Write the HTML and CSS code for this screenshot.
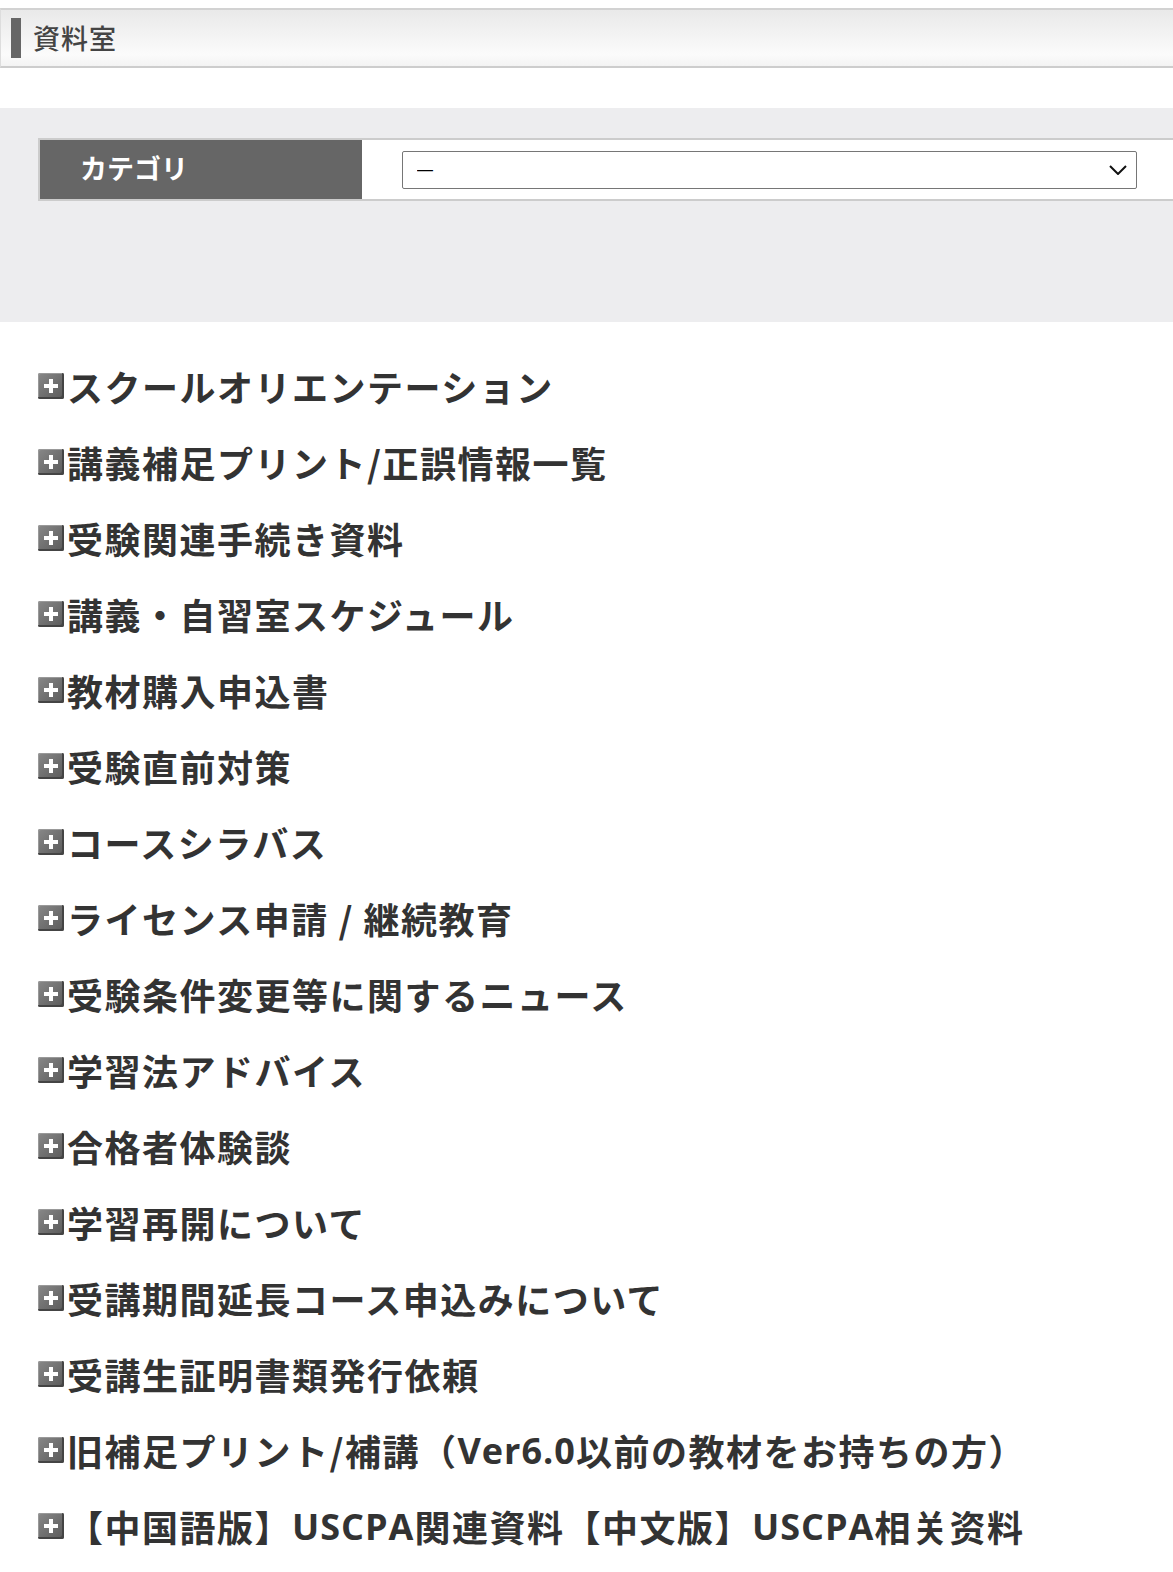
FILE: index.html
```html
<!DOCTYPE html>
<html lang="ja">
<head>
  <meta charset="UTF-8" />
  <meta name="viewport" content="width=device-width, initial-scale=1.0"/>
  <title>資料室</title>
  <link rel="stylesheet" href="styles.css">
</head>
<body>
  <div class="page-title"><h1>資料室</h1></div>

  <div class="search-box">
    <table class="search-table">
      <tr>
        <th>カテゴリ</th>
        <td>
          <div class="select-wrap">
            <select id="category">
              <option>—</option>
            </select>
            <svg class="select-arrow" width="18" height="10" viewBox="0 0 18 10"><path d="M1 1 L9 9 L17 1" fill="none" stroke="#111" stroke-width="2"/></svg>
          </div>
        </td>
      </tr>
    </table>
  </div>

  <ul class="doc-list">
    <li><span class="plus"></span>スクールオリエンテーション</li>
    <li><span class="plus"></span>講義補足プリント/正誤情報一覧</li>
    <li><span class="plus"></span>受験関連手続き資料</li>
    <li><span class="plus"></span>講義・自習室スケジュール</li>
    <li><span class="plus"></span>教材購入申込書</li>
    <li><span class="plus"></span>受験直前対策</li>
    <li><span class="plus"></span>コースシラバス</li>
    <li><span class="plus"></span>ライセンス申請 / 継続教育</li>
    <li><span class="plus"></span>受験条件変更等に関するニュース</li>
    <li><span class="plus"></span>学習法アドバイス</li>
    <li><span class="plus"></span>合格者体験談</li>
    <li><span class="plus"></span>学習再開について</li>
    <li><span class="plus"></span>受講期間延長コース申込みについて</li>
    <li><span class="plus"></span>受講生証明書類発行依頼</li>
    <li><span class="plus"></span>旧補足プリント/補講（<span class="latin">Ver6.0</span>以前の教材をお持ちの方）</li>
    <li><span class="plus"></span>【中国語版】<span class="latin">USCPA</span>関連資料【中文版】<span class="latin">USCPA</span>相关资料</li>
  </ul>
</body>
</html>
```

FILE: styles.css
```css
body { margin: 0; padding-top: 8px; font-family: "Noto Sans CJK JP", "Noto Sans", sans-serif; color: #333; background: #fff; overflow-x: hidden;}

.page-title { height: 56px; border-top: 2px solid #d2d2d2; border-bottom: 2px solid #cdcdcd; border-left: 1px solid #ddd; background: linear-gradient(#e9e9e9, #fbfbfb 80%, #f3f3f3); display: flex; align-items: center; padding-left: 10px;}
.page-title h1 { margin: 0; font-size: 27px; font-weight: 500; letter-spacing: 1px; color: #444; border-left: 10px solid #666; padding-left: 12px; line-height: 40px; height: 40px;}

.search-box { margin-top: 40px; background: #ededef; height: 184px; padding: 30px 0 0 38px;}
.search-table { width: 100%; border-collapse: collapse; border: 2px solid #ccc; border-right: none;}
.search-table th { width: 323px; height: 59px; padding: 0 0 4px 40px; box-sizing: border-box; line-height: 30px; background: #666; color: #fff; text-align: left; font-size: 27px; font-weight: bold; letter-spacing: 0;}
.search-table td { height: 59px; background: #fff; padding: 0 36px 0 40px;}
.select-wrap { position: relative;}
.select-wrap select { display: block; width: 100%; height: 38px; appearance: none; -webkit-appearance: none; border: 1px solid #767676; border-radius: 2px; background: #fff; padding: 0 14px; font-family: "Liberation Sans", sans-serif; font-size: 16px; color: #000;}
.select-arrow { position: absolute; right: 10px; top: 14px; pointer-events: none;}

.doc-list { list-style: none; margin: 26px 0 0; padding: 0 0 0 38px;}
.doc-list li { display: flex; align-items: center; height: 76px; font-size: 36px; font-weight: bold; letter-spacing: 1.5px; color: #333; white-space: nowrap;}
.latin { font-family: "Open Sans", "Noto Sans", sans-serif; font-weight: 700; letter-spacing: 1px;}
.plus { position: relative; flex: none; width: 26px; height: 26px; margin-right: 3px; border-radius: 2px; background: linear-gradient(135deg, #888, #5a5a5a); box-shadow: inset -2px -2px 0 #444, inset 1px 1px 0 #999;}
.plus::before, .plus::after { content: ""; position: absolute; background: #fff; left: 50%; top: 50%; transform: translate(-50%, -50%);}
.plus::before { width: 14px; height: 4px;}
.plus::after { width: 4px; height: 14px;}
```
